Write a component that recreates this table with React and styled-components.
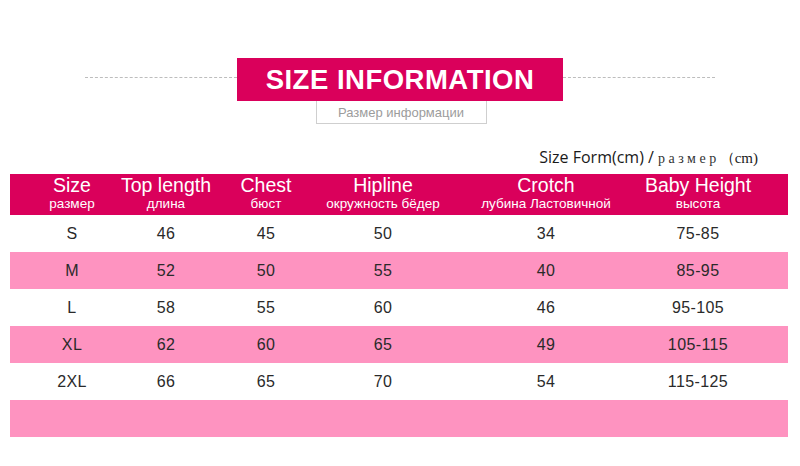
import React from 'react';
import styled, { createGlobalStyle } from 'styled-components';

const columns = [
  { title: 'Size', sub: 'размер', key: 'size' },
  { title: 'Top length', sub: 'длина', key: 'top' },
  { title: 'Chest', sub: 'бюст', key: 'chest' },
  { title: 'Hipline', sub: 'окружность бёдер', key: 'hip' },
  { title: 'Crotch', sub: 'лубина Ластовичной', key: 'crotch' },
  { title: 'Baby Height', sub: 'высота', key: 'height' },
];

const rows = [
  ['S', '46', '45', '50', '34', '75-85'],
  ['M', '52', '50', '55', '40', '85-95'],
  ['L', '58', '55', '60', '46', '95-105'],
  ['XL', '62', '60', '65', '49', '105-115'],
  ['2XL', '66', '65', '70', '54', '115-125'],
  ['', '', '', '', '', ''],
];

const App = () => {
  return (
    <>
      <GlobalStyle />
      <Page>
        <Banner>
          <DashLine />
          <TitleWrap>
            <TitleBox>SIZE INFORMATION</TitleBox>
            <SubtitleBox>Размер информации</SubtitleBox>
          </TitleWrap>
          <DashLine />
        </Banner>

        <FormNote>
          Size Form(cm) / <SerifPart>размер</SerifPart>
          <ParenPart>（cm)</ParenPart>
        </FormNote>

        <Table>
          <HeaderRow>
            {columns.map((col) => (
              <HeaderCell key={col.key}>
                <HeadMain>{col.title}</HeadMain>
                <HeadSub>{col.sub}</HeadSub>
              </HeaderCell>
            ))}
            <span />
          </HeaderRow>
          {rows.map((row, i) => (
            <DataRow key={i} pink={i % 2 === 1}>
              {row.map((val, j) => (
                <DataCell key={j}>{val}</DataCell>
              ))}
              <span />
            </DataRow>
          ))}
        </Table>
      </Page>
    </>
  );
};

export default App;

const GlobalStyle = createGlobalStyle`
  html, body {
    margin: 0;
    padding: 0;
    background: #ffffff;
  }

  body {
    font-family: 'Liberation Sans', Arial, sans-serif;
  }
`;

const Page = styled.div`
  width: 800px;
  height: 466px;
  overflow: hidden;
  display: flex;
  flex-direction: column;
  background: #ffffff;
`;

const Banner = styled.div`
  display: flex;
  align-items: flex-start;
  padding: 58px 85px 0;
`;

const DashLine = styled.div`
  flex: 1;
  margin-top: 19px;
  border-top: 1px dashed #bdbdbd;
`;

const TitleWrap = styled.div`
  display: flex;
  flex-direction: column;
  align-items: center;
  width: 326px;
`;

const TitleBox = styled.div`
  width: 100%;
  height: 43px;
  display: flex;
  align-items: center;
  justify-content: center;
  background: #da005b;
  color: #ffffff;
  font-family: 'Liberation Sans', Arial, sans-serif;
  font-weight: bold;
  font-size: 27.5px;
  letter-spacing: 0.5px;
`;

const SubtitleBox = styled.div`
  width: 169px;
  height: 22px;
  margin-left: 2px;
  display: flex;
  align-items: center;
  justify-content: center;
  border: 1px solid #cfcfcf;
  border-top: none;
  color: #9c9c9c;
  font-size: 13px;
`;

const FormNote = styled.div`
  align-self: flex-end;
  margin: 23px 42px 7px 0;
  height: 20px;
  line-height: 20px;
  font-family: 'Open Sans', 'Liberation Sans', sans-serif;
  font-size: 16px;
  color: #1a1a1a;
  white-space: nowrap;
`;

const SerifPart = styled.span`
  font-family: 'Liberation Serif', 'Times New Roman', serif;
  font-size: 14px;
  letter-spacing: 3.5px;
  color: #333333;
`;

const ParenPart = styled.span`
  font-family: 'Liberation Serif', 'Times New Roman', serif;
  font-size: 15px;
  color: #1a1a1a;
`;

const Table = styled.div`
  margin: 0 12px 0 10px;
  display: flex;
  flex-direction: column;
`;

const gridCols = '124px 64px 136px 98px 228px 76px 1fr';

const HeaderRow = styled.div`
  display: grid;
  grid-template-columns: ${gridCols};
  height: 41px;
  background: #da005b;
`;

const HeaderCell = styled.div`
  display: flex;
  flex-direction: column;
  align-items: center;
  padding-top: 1px;
  color: #ffffff;
  white-space: nowrap;
`;

const HeadMain = styled.div`
  font-size: 19.5px;
  line-height: 21px;
`;

const HeadSub = styled.div`
  font-size: 13.5px;
  line-height: 15px;
`;

const DataRow = styled.div`
  display: grid;
  grid-template-columns: ${gridCols};
  height: 37px;
  background: ${(props) => (props.pink ? '#fe93c0' : '#ffffff')};
`;

const DataCell = styled.div`
  display: flex;
  align-items: center;
  justify-content: center;
  font-size: 16px;
  letter-spacing: 0.4px;
  color: #2a2a2a;
  white-space: nowrap;
`;
